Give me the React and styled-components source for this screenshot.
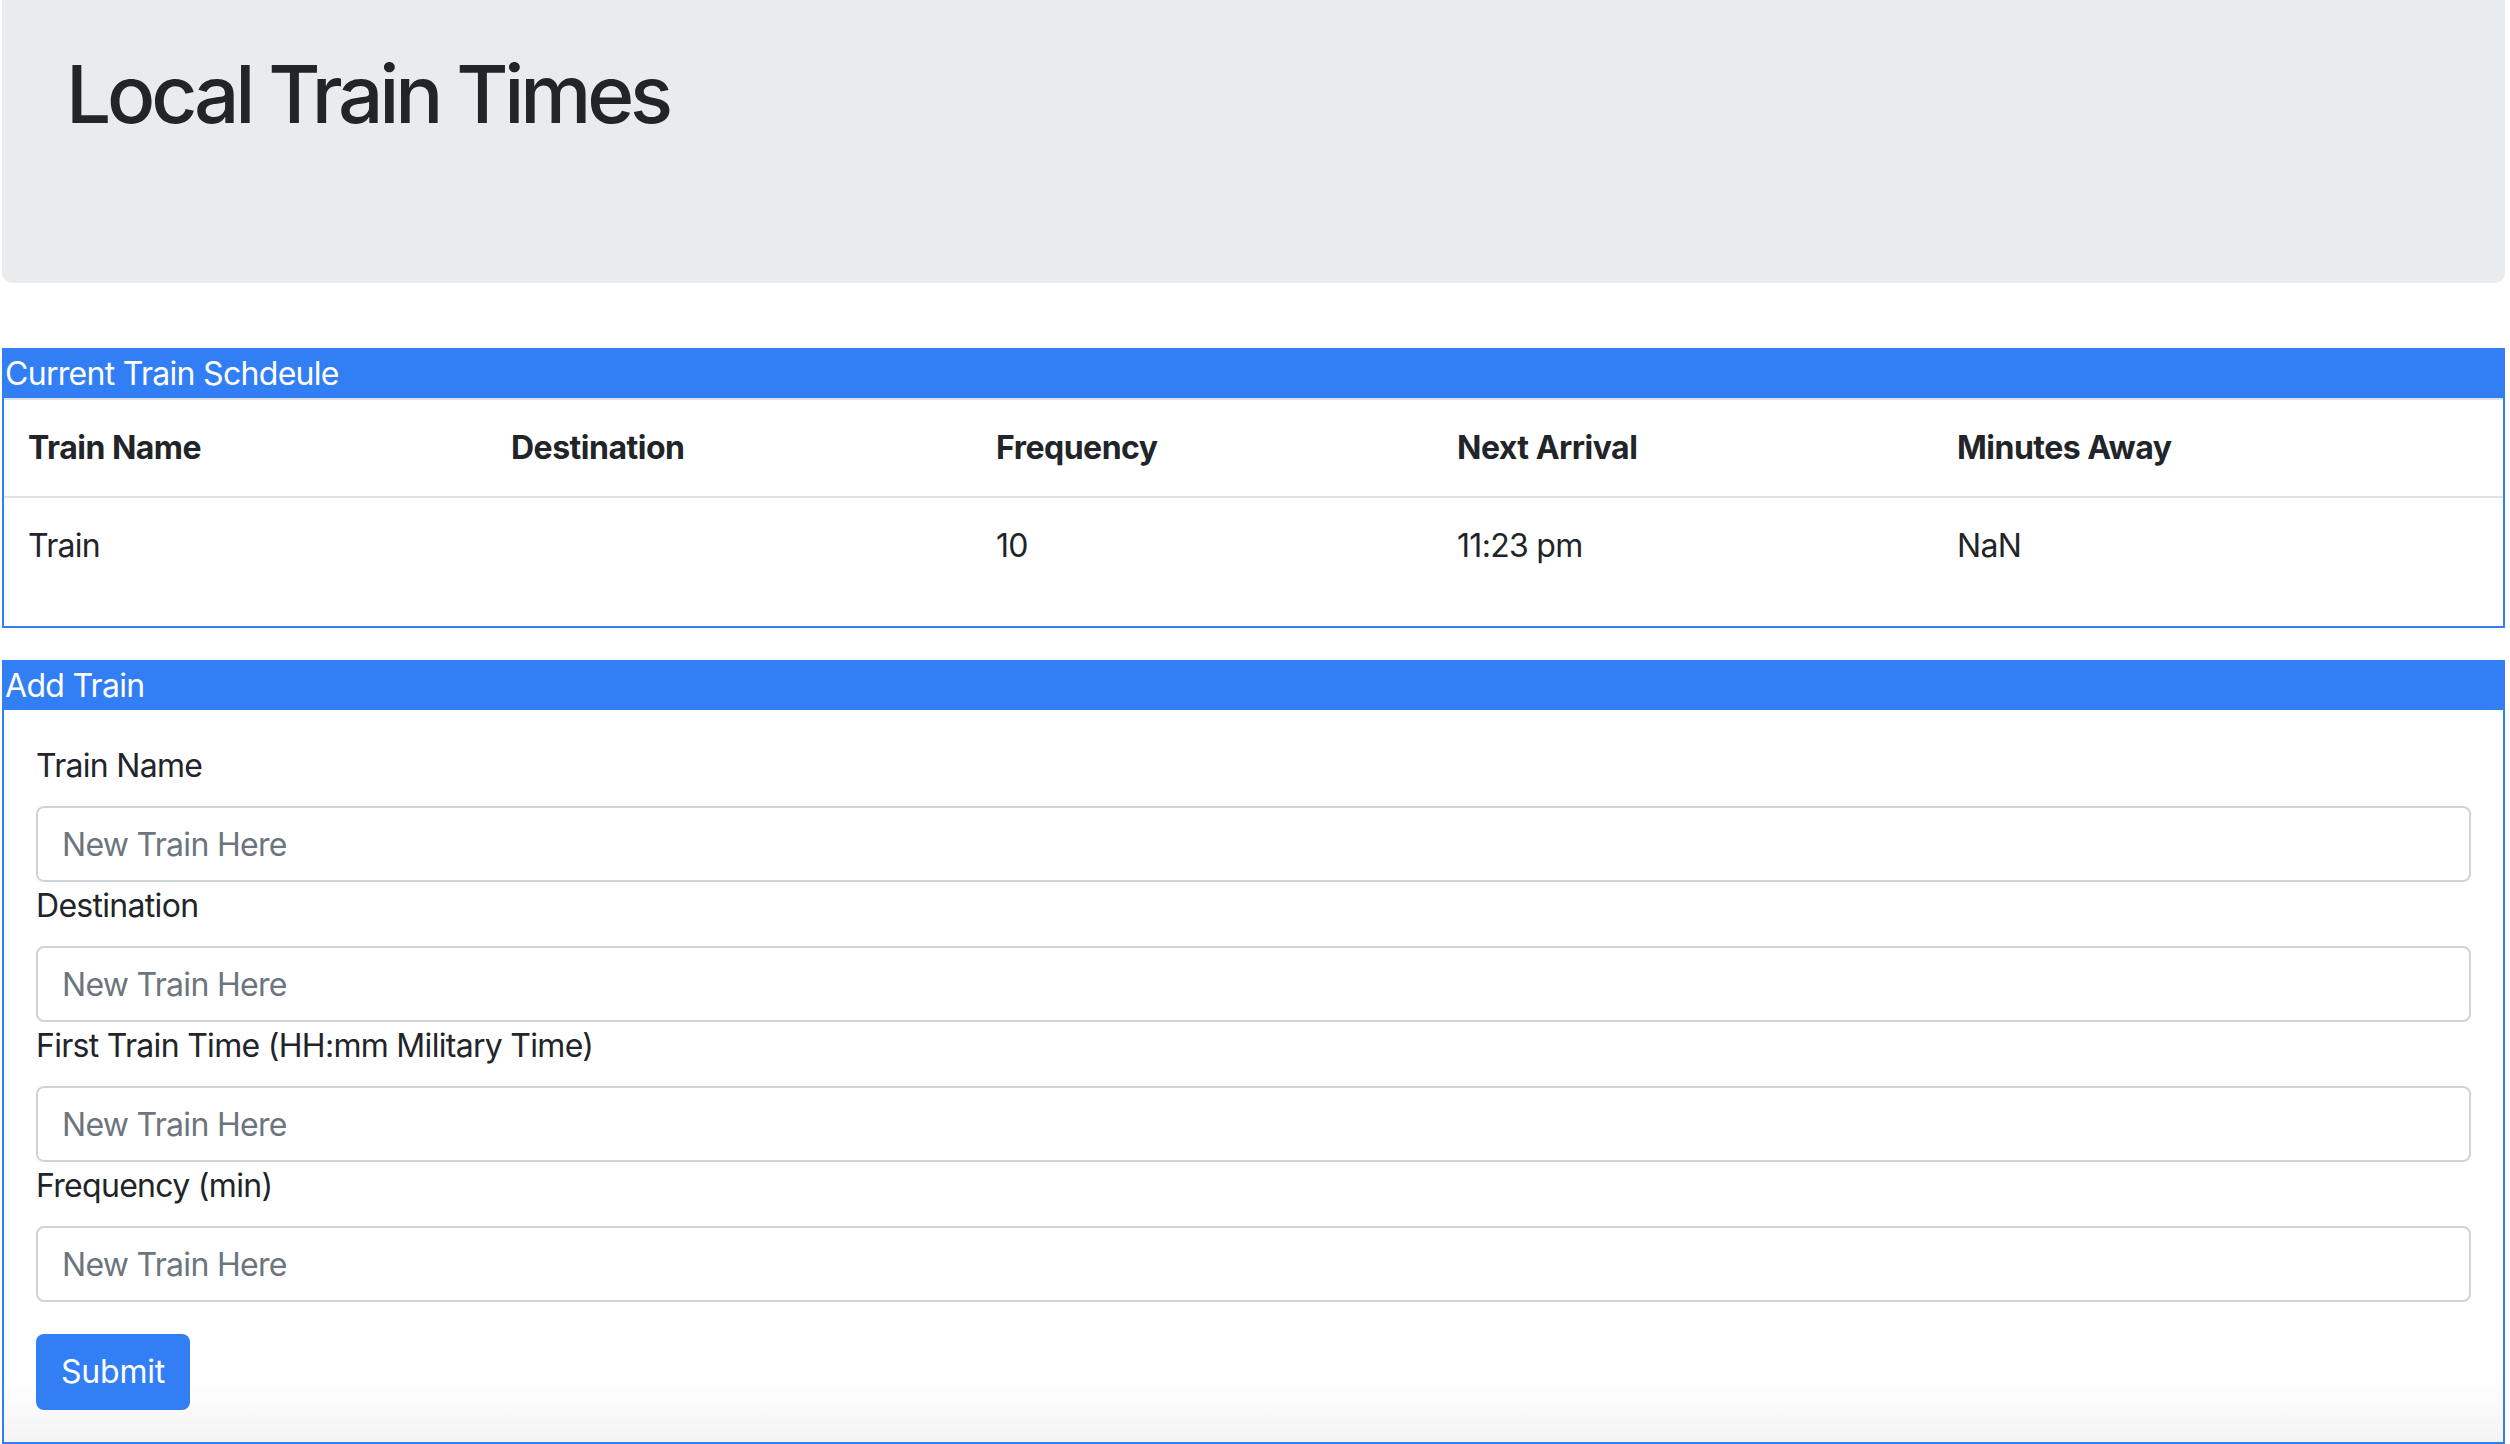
import React from "react";
import styled, { createGlobalStyle } from "styled-components";

const GlobalStyle = createGlobalStyle`
  * {
    box-sizing: border-box;
  }
  body {
    margin: 0;
    background: #fff;
    color: #212529;
    font-family: Inter, "Liberation Sans", sans-serif;
    font-size: 32px;
    line-height: 1.5;
    letter-spacing: -0.7px;
  }
`;

const Page = styled.div`
  padding: 0 5px 0 2px;
`;

const Jumbotron = styled.header`
  height: 283px;
  padding: 46px 64px 0;
  margin-bottom: 65px;
  background: #e9ecef;
  border-radius: 0 0 10px 10px;
`;

const Title = styled.h1`
  margin: 0;
  font-size: 80px;
  font-weight: 500;
  line-height: 1.2;
  letter-spacing: -4.2px;
`;

const Panel = styled.section`
  border: 2px solid #327ef5;
  margin-bottom: 32px;
`;

const PanelHeading = styled.div`
  height: 48px;
  line-height: 48px;
  padding: 0 0 0 1px;
  background: #327ef5;
  color: #fff;
`;

const Table = styled.table`
  width: 100%;
  border-collapse: collapse;
  margin-bottom: 32px;
`;

const HeadCell = styled.th`
  width: ${({ $w }) => $w || "auto"};
  padding: 24px;
  text-align: left;
  font-weight: 700;
  letter-spacing: -0.5px;
  border-top: 2px solid #dee2e6;
  border-bottom: 2px solid #dee2e6;
`;

const Cell = styled.td`
  padding: 24px;
`;

const FormBody = styled.form`
  display: flex;
  flex-direction: column;
  align-items: flex-start;
  padding: 32px;
  background: linear-gradient(180deg, #fff calc(100% - 64px), #f4f4f4 100%);
`;

const Label = styled.label`
  display: block;
  margin-bottom: 16px;
`;

const Input = styled.input`
  width: 100%;
  height: 76px;
  padding: 0 24px;
  border: 2px solid #ced4da;
  border-radius: 8px;
  background: #fff;
  color: #495057;
  font: inherit;
  letter-spacing: inherit;

  &::placeholder {
    color: #6c757d;
  }
`;

const SubmitButton = styled.button`
  height: 76px;
  margin-top: 32px;
  padding: 0 25px;
  border: none;
  border-radius: 8px;
  background: #327ef5;
  color: #fff;
  font: inherit;
  letter-spacing: -0.2px;
`;

const columns = [
  { label: "Train Name", width: "483px" },
  { label: "Destination", width: "485px" },
  { label: "Frequency", width: "461px" },
  { label: "Next Arrival", width: "500px" },
  { label: "Minutes Away" },
];

const trains = [["Train", "", "10", "11:23 pm", "NaN"]];

const fields = [
  "Train Name",
  "Destination",
  "First Train Time (HH:mm Military Time)",
  "Frequency (min)",
];

export default function App() {
  return (
    <Page>
      <GlobalStyle />
      <Jumbotron>
        <Title>Local Train Times</Title>
      </Jumbotron>

      <Panel>
        <PanelHeading>Current Train Schdeule</PanelHeading>
        <Table>
          <thead>
            <tr>
              {columns.map((c) => (
                <HeadCell key={c.label} $w={c.width}>
                  {c.label}
                </HeadCell>
              ))}
            </tr>
          </thead>
          <tbody>
            {trains.map((row, i) => (
              <tr key={i}>
                {row.map((v, j) => (
                  <Cell key={j}>{v}</Cell>
                ))}
              </tr>
            ))}
          </tbody>
        </Table>
      </Panel>

      <Panel>
        <PanelHeading>Add Train</PanelHeading>
        <FormBody onSubmit={(e) => e.preventDefault()}>
          {fields.map((f) => (
            <React.Fragment key={f}>
              <Label>{f}</Label>
              <Input placeholder="New Train Here" />
            </React.Fragment>
          ))}
          <SubmitButton type="submit">Submit</SubmitButton>
        </FormBody>
      </Panel>
    </Page>
  );
}
